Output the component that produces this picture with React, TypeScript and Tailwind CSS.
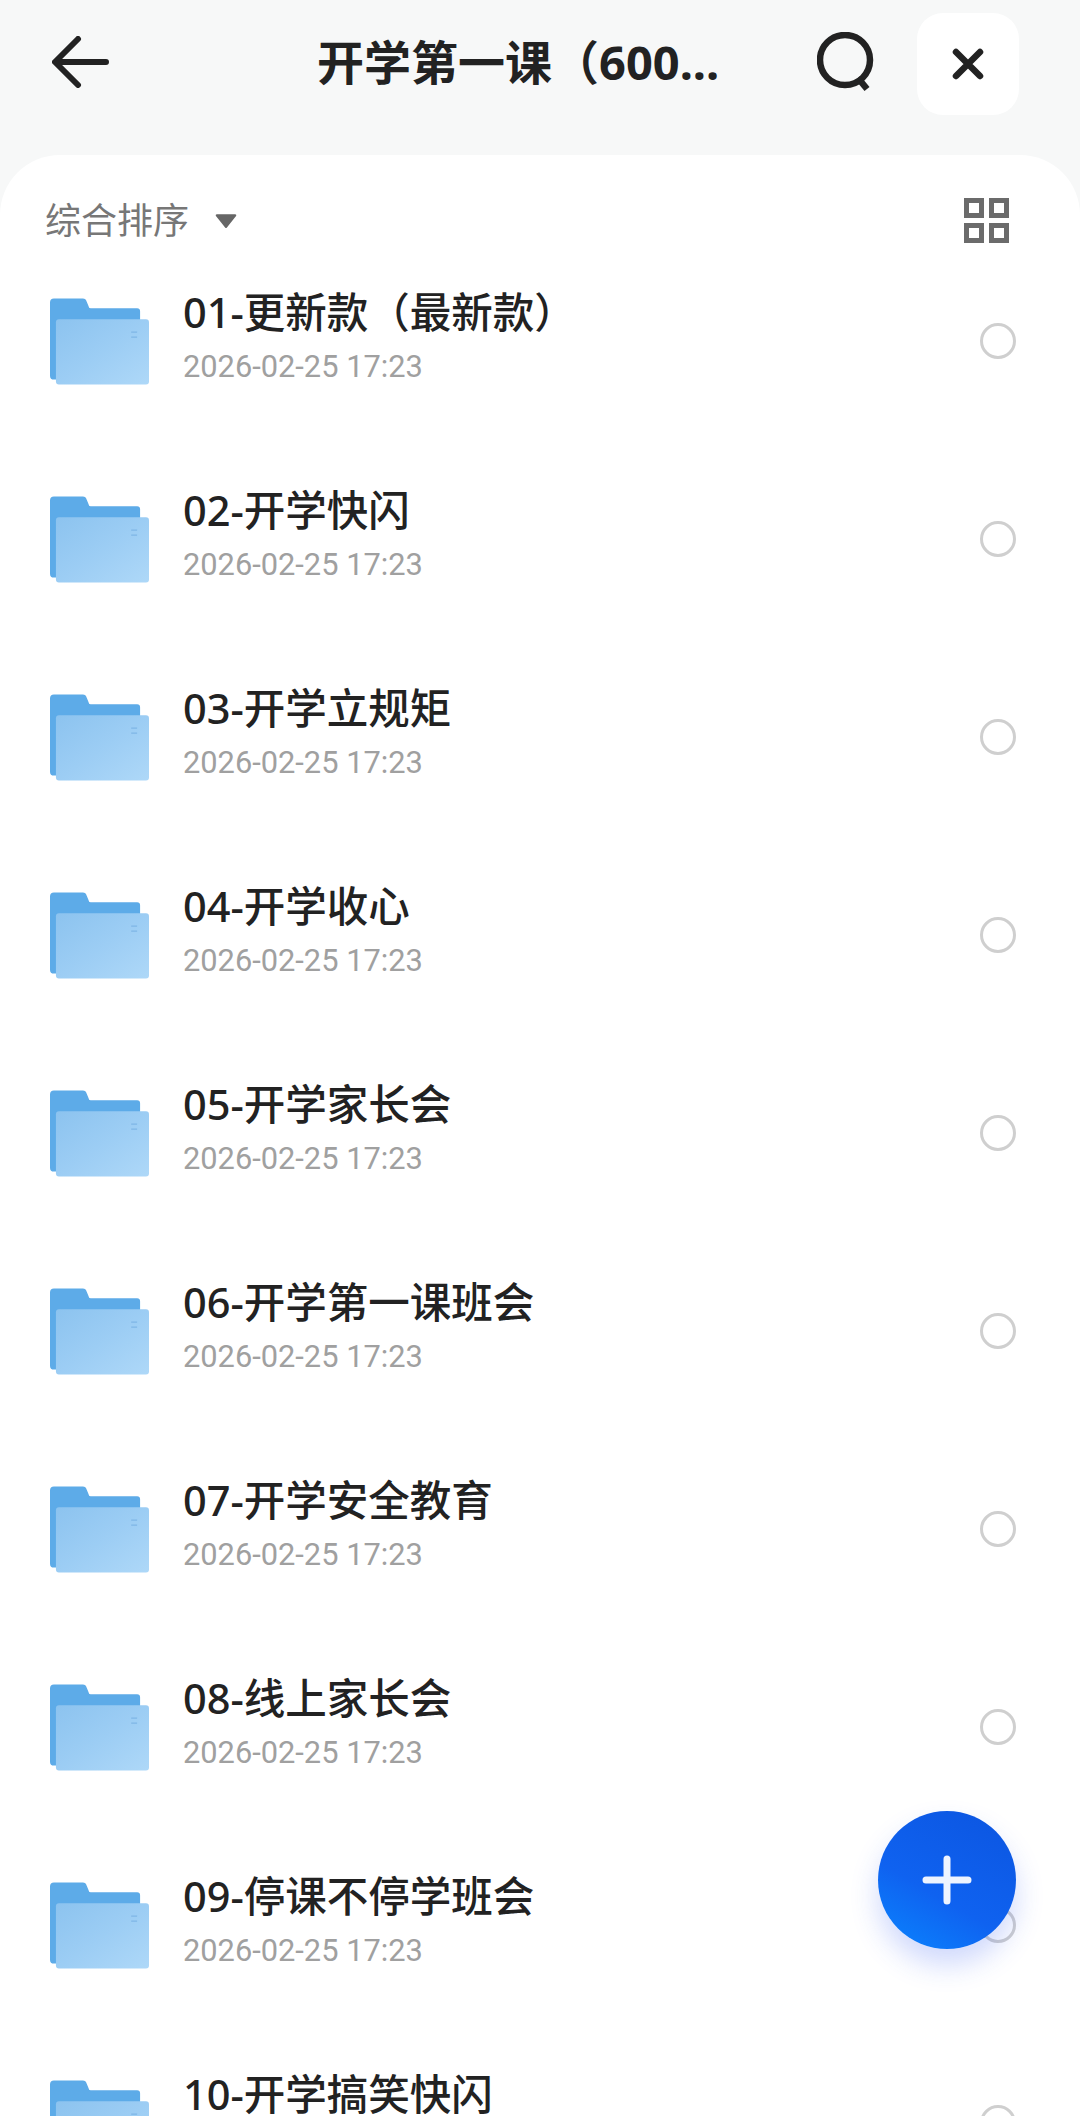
const items = [
  "01-更新款（最新款）",
  "02-开学快闪",
  "03-开学立规矩",
  "04-开学收心",
  "05-开学家长会",
  "06-开学第一课班会",
  "07-开学安全教育",
  "08-线上家长会",
  "09-停课不停学班会",
  "10-开学搞笑快闪",
];

function Folder() {
  return (
    <svg width="99" height="88" viewBox="0 0 100 88" className="shrink-0">
      <defs>
        <linearGradient id="front" x1="0" y1="0" x2="1" y2="1">
          <stop offset="0" stopColor="#8cc3ef" />
          <stop offset="0.5" stopColor="#9ccdf4" />
          <stop offset="1" stopColor="#aed8f8" />
        </linearGradient>
      </defs>
      <path d="M0 5a4 4 0 0 1 4-4h29a4 4 0 0 1 4 3l2 5a2 2 0 0 0 2 2h47a3 3 0 0 1 3 3v69H4a4 4 0 0 1-4-4z" fill="#5dabe8" />
      <path d="M6 25a3 3 0 0 1 3-3h88a3 3 0 0 1 3 3v60a3 3 0 0 1-3 3H9a3 3 0 0 1-3-3z" fill="url(#front)" />
      <path d="M82 35h6M82 40h6" stroke="#7fb6e6" strokeWidth="1.2" />
    </svg>
  );
}

function Row({ name }: { name: string }) {
  return (
    <div className="flex h-[198px] shrink-0 items-center pl-[50px] pr-[64px]">
      <Folder />
      <div className="ml-[34px] flex-1 -mt-[10px]">
        <div className="text-[41.5px] font-medium leading-[54px] text-[#222222] -mt-[1px]">{name}</div>
        <div className="mt-[8px] font-['Roboto',sans-serif] text-[30.8px] leading-[40px] text-[#a0a0a0]">2026-02-25 17:23</div>
      </div>
      <div className="h-[36px] w-[36px] rounded-full border-[3px] border-[#cfcfcf]" />
    </div>
  );
}

export default function App() {
  return (
    <div className="relative flex h-[2116px] w-[1080px] flex-col overflow-hidden bg-[#f7f8f8] font-['Noto_Sans','Noto_Sans_CJK_SC',sans-serif]">
      <header className="flex h-[155px] shrink-0 items-start">
        <div className="flex h-[124px] w-[160px] items-center pl-[52px]">
          <svg width="58" height="52" viewBox="0 0 58 52" fill="none" stroke="#222222" strokeWidth="6" strokeLinecap="round" strokeLinejoin="round">
            <path d="M54 26H4M26 3 3 26l23 23" />
          </svg>
        </div>
        <div className="flex h-[124px] flex-1 items-center pl-[157px] text-[47px] font-bold text-[#222222]">开学第一课（600...</div>
        <div className="flex h-[124px] w-[62px] items-center">
          <svg width="60" height="60" viewBox="0 0 60 60" fill="none" stroke="#222222" strokeWidth="6.5">
            <circle cx="28" cy="28" r="25" />
            <path d="m41 46 9 11" />
          </svg>
        </div>
        <div className="ml-[38px] mr-[61px] mt-[13px] flex h-[102px] w-[102px] items-center justify-center rounded-[26px] bg-white">
          <svg width="32" height="32" viewBox="0 0 32 32" fill="none" stroke="#222222" strokeWidth="6.5" strokeLinecap="round">
            <path d="m4 4 24 24M28 4 4 28" />
          </svg>
        </div>
      </header>
      <main className="flex min-h-0 flex-1 flex-col overflow-hidden rounded-t-[60px] bg-white">
        <div className="flex h-[87px] shrink-0 items-start justify-between pl-[45px] pr-[70px] pt-[42px]">
          <div className="flex items-center text-[36px] leading-[48px] text-[#777777]">
            综合排序
            <svg width="24" height="16" viewBox="0 0 20 14" className="ml-[25px]">
              <path d="M2 1h16a1 1 0 0 1 .8 1.6l-8 10a1 1 0 0 1-1.6 0l-8-10A1 1 0 0 1 2 1z" fill="#666666" />
            </svg>
          </div>
          <svg width="46" height="46" viewBox="0 0 46 46" fill="none" stroke="#6b6b6b" strokeWidth="5" className="mt-[1px]">
            <rect x="2.5" y="2.5" width="15" height="15" />
            <rect x="27.5" y="2.5" width="15" height="15" />
            <rect x="2.5" y="27.5" width="15" height="15" />
            <rect x="27.5" y="27.5" width="15" height="15" />
          </svg>
        </div>
        <div className="flex flex-col">
          {items.map((name) => (
            <Row key={name} name={name} />
          ))}
        </div>
      </main>
      <button className="absolute left-[878px] top-[1811px] flex h-[138px] w-[138px] items-center justify-center rounded-full bg-[linear-gradient(30deg,#0a86ff_0%,#0f62f0_40%,#0c55e0_100%)] shadow-[0_16px_28px_rgba(40,80,240,0.22)]">
        <svg width="50" height="50" viewBox="0 0 50 50" fill="none" stroke="#eef4ff" strokeWidth="7" strokeLinecap="round">
          <path d="M25 4v42M4 25h42" />
        </svg>
      </button>
    </div>
  );
}
